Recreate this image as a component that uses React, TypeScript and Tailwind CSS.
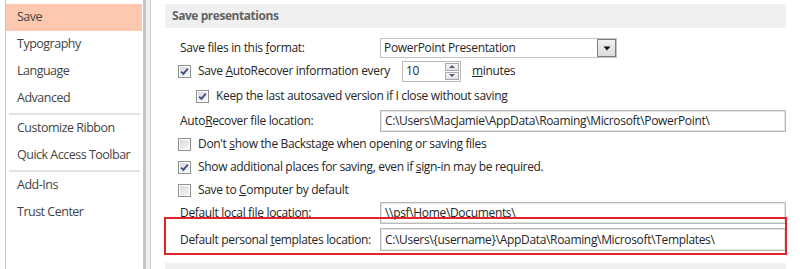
import React from 'react';

const navGroups = [
    ['Save', 'Typography', 'Language', 'Advanced'],
    ['Customize Ribbon', 'Quick Access Toolbar'],
    ['Add-Ins', 'Trust Center'],
];

function Box({ on }: { on?: boolean }) {
    return (
        <span className="w-[13px] h-[13px] shrink-0 border border-[#8e8f8f] p-px bg-white">
            <span className="w-full h-full flex items-center justify-center bg-gradient-to-br from-[#d9d9d9] to-[#f7f7f7]">
                {on && (
                    <svg width="9" height="9" viewBox="0 0 9 9">
                        <path d="M1.2 4.6 L3.4 6.8 L7.8 1.6" fill="none" stroke="#3c4f86" strokeWidth="1.9" />
                    </svg>
                )}
            </span>
        </span>
    );
}

function Field({ value }: { value: string }) {
    return (
        <div className="flex-1 h-full border border-[#b9b9b9] shadow-[inset_0_0_0_1px_#e4e4e4] bg-white flex items-center pl-[4px] whitespace-nowrap overflow-hidden">
            {value}
        </div>
    );
}

function CheckRow({ on, indent, children }: { on?: boolean; indent?: boolean; children: React.ReactNode }) {
    return (
        <div className={`shrink-0 flex items-center gap-[7px] mt-px ${indent ? 'ml-[31px] h-[24px]' : 'ml-[13px] h-[22px]'}`}>
            <Box on={on} />
            <span className="whitespace-nowrap">{children}</span>
        </div>
    );
}

export default function App() {
    return (
        <div className="w-[800px] h-[269px] bg-white flex overflow-hidden relative font-['Open_Sans',sans-serif] text-[#262626]">
            {/* left nav */}
            <div className="w-[143px] pl-[5px] h-full shrink-0">
                <div className="h-full border-l border-[#c4c4c4] pt-[4px] text-[12.5px] tracking-[-0.5px] text-[#444]">
                    {navGroups.map((group, gi) => (
                        <div key={gi}>
                            {gi > 0 && <div className="mx-[3px] mt-px mb-0 h-[2px] bg-[#e3e3e3]" />}
                            {group.map((label) => (
                                <div
                                    key={label}
                                    className={`h-[27px] flex items-center pl-[11px] mr-px ${label === 'Save' ? 'bg-[#fcc8b0]' : ''}`}
                                >
                                    {label}
                                </div>
                            ))}
                        </div>
                    ))}
                </div>
            </div>
            <div className="w-[3px] bg-[#c6c6c6] shrink-0" />
            <div className="w-[4px] bg-[#f0f0f0] shrink-0" />
            <div className="w-px bg-[#c9c9c9] shrink-0" />

            {/* options */}
            <div className="flex-1 pl-[14px] pr-[14px] flex flex-col text-[12px] tracking-[-0.33px]">
                <div className="mt-[4px] h-[24px] shrink-0 bg-[#f0f0f0] flex items-center pl-[7px] font-bold text-[#646464] tracking-[-0.45px]">
                    Save presentations
                </div>

                <div className="shrink-0 mt-[10px] h-[20px] flex items-center pl-[15px]">
                    <span className="w-[200px]">
                        Save files in this <u>f</u>ormat:
                    </span>
                    <div className="w-[237px] h-full border border-[#c3c3c3] flex">
                        <span className="flex-1 flex items-center pl-[3px]">PowerPoint Presentation</span>
                        <span className="w-[19px] h-full border border-[#7e7e7e] bg-gradient-to-b from-[#f0f0f0] to-[#dcdcdc] flex items-center justify-center">
                            <svg width="8" height="5" viewBox="0 0 8 5">
                                <path d="M0.5 0.5 H7.5 L4 4.5 Z" fill="#111" />
                            </svg>
                        </span>
                    </div>
                </div>

                <div className="shrink-0 mt-px h-[24px] flex items-center ml-[13px]">
                    <Box on />
                    <span className="ml-[7px] whitespace-nowrap">
                        Save <u>A</u>utoRecover information every
                    </span>
                    <div className="ml-[12px] w-[59px] h-[21px] border border-[#b9b9b9] flex bg-white">
                        <span className="flex-1 flex items-center pl-[3px]">10</span>
                        <div className="w-[16px] h-full flex flex-col gap-px p-px">
                            <span className="flex-1 border border-[#a9a9a9] bg-gradient-to-b from-[#f7f7f7] to-[#e1e1e1] flex items-center justify-center">
                                <svg width="6" height="3" viewBox="0 0 6 3">
                                    <path d="M0 3 L3 0 L6 3 Z" fill="#4a5a84" />
                                </svg>
                            </span>
                            <span className="flex-1 border border-[#a9a9a9] bg-gradient-to-b from-[#f7f7f7] to-[#e1e1e1] flex items-center justify-center">
                                <svg width="6" height="3" viewBox="0 0 6 3">
                                    <path d="M0 0 L6 0 L3 3 Z" fill="#4a5a84" />
                                </svg>
                            </span>
                        </div>
                    </div>
                    <span className="ml-[11px]">
                        <u>m</u>inutes
                    </span>
                </div>

                <CheckRow on indent>
                    Keep the last autosaved version if I close without saving
                </CheckRow>

                <div className="shrink-0 mt-[2px] h-[22px] flex items-center pl-[15px]">
                    <span className="w-[200px]">
                        Auto<u>R</u>ecover file location:
                    </span>
                    <Field value="C:\Users\MacJamie\AppData\Roaming\Microsoft\PowerPoint\" />
                </div>

                <CheckRow>
                    Don't <u>s</u>how the Backstage when opening or saving files
                </CheckRow>
                <CheckRow on>
                    Show additional places for saving, even if <u>s</u>ign-in may be required.
                </CheckRow>
                <CheckRow>
                    Save to <u>C</u>omputer by default
                </CheckRow>

                <div className="shrink-0 mt-px h-[22px] flex items-start pl-[15px]">
                    <div className="w-[200px] h-[15px] overflow-hidden leading-[16px] pt-[3px]">
                        Default local f<u>i</u>le location:
                    </div>
                    <Field value="\\psf\Home\Documents\" />
                </div>

                <div className="shrink-0 mt-[4px] h-[23px] flex items-center pl-[15px]">
                    <span className="w-[200px]">
                        Default personal <u>t</u>emplates location:
                    </span>
                    <Field value="C:\Users\{username}\AppData\Roaming\Microsoft\Templates\" />
                </div>

                <div className="mt-[12px] h-[20px] shrink-0 bg-[#f0f0f0]" />
            </div>

            {/* highlight */}
            <div className="absolute left-[164px] top-[217px] w-[623px] h-[38px] border-2 border-[#e5222b] pointer-events-none" />
        </div>
    );
}
